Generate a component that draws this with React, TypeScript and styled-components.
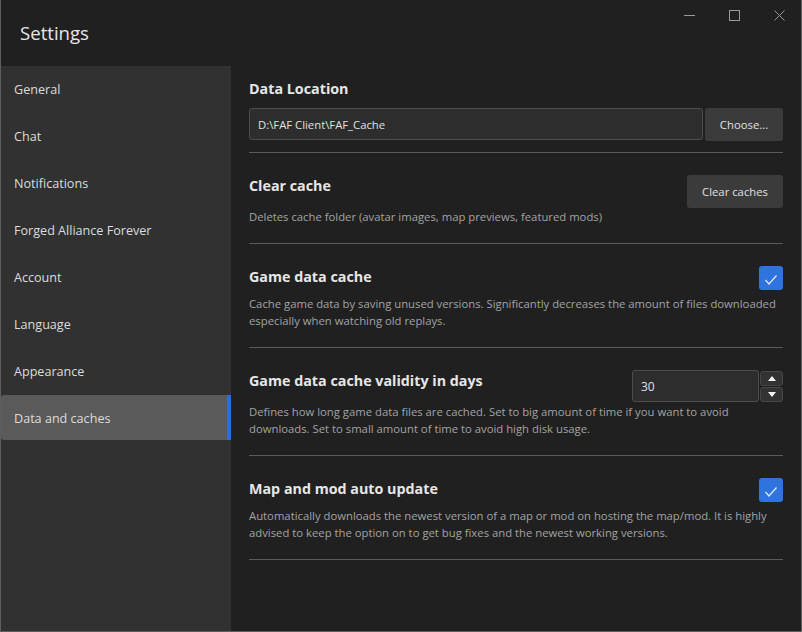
import React from 'react';
import styled, { createGlobalStyle } from 'styled-components';

const GlobalStyle = createGlobalStyle`
  html, body {
    margin: 0;
    padding: 0;
    background: #202020;
  }
  * {
    box-sizing: border-box;
  }
`;

const FONT = `"Open Sans", "Noto Sans", "Liberation Sans", sans-serif`;

const Window = styled.div`
  width: 802px;
  height: 632px;
  display: flex;
  flex-direction: column;
  border: 1px solid #5e5e5e;
  border-top: none;
  background: #202020;
  font-family: ${FONT};
  color: #e4e4e4;
  overflow: hidden;
`;

const TitleBar = styled.div`
  height: 66px;
  display: flex;
  justify-content: space-between;
  align-items: flex-start;
  flex-shrink: 0;
`;

const Title = styled.div`
  font-size: 18.6px;
  color: #e6e6e6;
  padding: 20px 0 0 19px;
  line-height: 26px;
`;

const Controls = styled.div`
  display: flex;
  margin-right: -1px;
`;

const ControlButton = styled.div`
  width: 45px;
  height: 30px;
  display: flex;
  align-items: center;
  justify-content: center;
  color: #9a9a9a;
`;

const Body = styled.div`
  flex: 1;
  display: flex;
  min-height: 0;
`;

const Sidebar = styled.nav`
  width: 230px;
  background: #313131;
  display: flex;
  flex-direction: column;
  gap: 2px;
`;

const NavItem = styled.div<{ $active?: boolean }>`
  height: 45px;
  display: flex;
  align-items: center;
  padding: 2px 0 0 13px;
  font-size: 12.6px;
  color: #dcdcdc;
  border-radius: 3px 0 0 3px;
  background: ${(p) => (p.$active ? '#5a5a5a' : 'transparent')};
  box-shadow: ${(p) => (p.$active ? 'inset -4px 0 0 #2a6fdb' : 'none')};
`;

const Content = styled.main`
  flex: 1;
  padding: 13px 18px 0 18px;
  background: #202020;
`;

const Section = styled.section<{ $first?: boolean }>`
  padding: ${(p) => (p.$first ? '0 0 11px' : '22px 0 18px')};
  border-bottom: 1px solid #5a5a5a;
`;

const Row = styled.div`
  display: flex;
  justify-content: space-between;
  align-items: flex-start;
  gap: 16px;
`;

const TextBlock = styled.div`
  flex: 1;
  padding-top: 1px;
`;

const Heading = styled.h3`
  margin: 0;
  font-size: 14.3px;
  font-weight: 700;
  line-height: 20px;
  color: #e6e6e6;
`;

const Description = styled.p<{ $gap?: number }>`
  margin: ${(p) => p.$gap ?? 8}px 0 0;
  font-size: 11.3px;
  line-height: 17px;
  color: #a3a3a3;
`;

const PathRow = styled.div`
  display: flex;
  gap: 2px;
  margin-top: 9px;
`;

const TextField = styled.div`
  flex: 1;
  height: 32px;
  display: flex;
  align-items: center;
  padding-left: 8px;
  background: #2d2d2d;
  border: 1px solid #4d4d4d;
  border-radius: 3px;
  font-size: 11.3px;
  color: #e0e0e0;
`;

const Button = styled.div<{ $width: number }>`
  width: ${(p) => p.$width}px;
  height: 33px;
  display: flex;
  align-items: center;
  justify-content: center;
  background: #3b3b3b;
  border-radius: 3px;
  font-size: 11.3px;
  color: #e0e0e0;
  flex-shrink: 0;
`;

const Checkbox = styled.div`
  width: 24px;
  height: 24px;
  border-radius: 3px;
  background: #2f74de;
  display: flex;
  align-items: center;
  justify-content: center;
  flex-shrink: 0;
`;

const Spinner = styled.div`
  display: flex;
  gap: 1px;
  flex-shrink: 0;
`;

const SpinField = styled(TextField)`
  flex: none;
  width: 127px;
  font-size: 12px;
`;

const SpinButtons = styled.div`
  display: flex;
  flex-direction: column;
  justify-content: space-between;
  padding-top: 1px;
  height: 32px;
`;

const SpinButton = styled.div`
  width: 23px;
  height: 15px;
  display: flex;
  align-items: center;
  justify-content: center;
  background: #323232;
  border: 1px solid #474747;
  border-radius: 3px;
`;

const Check = () => (
  <svg width="24" height="24" viewBox="0 0 24 24">
    <path d="M6.5 14 L10 18 L17.5 9.5" fill="none" stroke="#dde8fa" strokeWidth="1.3" />
  </svg>
);

const Arrow = ({ up }: { up?: boolean }) => (
  <svg width="8" height="5" viewBox="0 0 8 5">
    <path d={up ? 'M0 5 L4 0 L8 5 Z' : 'M0 0 L8 0 L4 5 Z'} fill="#f2f2f2" />
  </svg>
);

const navItems = [
  'General',
  'Chat',
  'Notifications',
  'Forged Alliance Forever',
  'Account',
  'Language',
  'Appearance',
  'Data and caches',
];

export default function App() {
  return (
    <>
      <GlobalStyle />
      <Window>
        <TitleBar>
          <Title>Settings</Title>
          <Controls>
            <ControlButton>
              <svg width="11" height="1" viewBox="0 0 11 1">
                <rect width="11" height="1" fill="currentColor" />
              </svg>
            </ControlButton>
            <ControlButton>
              <svg width="11" height="11" viewBox="0 0 11 11">
                <rect x="0.5" y="0.5" width="10" height="10" fill="none" stroke="currentColor" />
              </svg>
            </ControlButton>
            <ControlButton>
              <svg width="11" height="11" viewBox="0 0 11 11">
                <path d="M0.5 0.5 L10.5 10.5 M10.5 0.5 L0.5 10.5" stroke="currentColor" />
              </svg>
            </ControlButton>
          </Controls>
        </TitleBar>
        <Body>
          <Sidebar>
            {navItems.map((item) => (
              <NavItem key={item} $active={item === 'Data and caches'}>
                {item}
              </NavItem>
            ))}
          </Sidebar>
          <Content>
            <Section $first>
              <Heading>Data Location</Heading>
              <PathRow>
                <TextField>D:\FAF Client\FAF_Cache</TextField>
                <Button $width={78}>Choose...</Button>
              </PathRow>
            </Section>

            <Section>
              <Row>
                <TextBlock>
                  <Heading>Clear cache</Heading>
                  <Description $gap={12}>
                    Deletes cache folder (avatar images, map previews, featured mods)
                  </Description>
                </TextBlock>
                <Button $width={96}>Clear caches</Button>
              </Row>
            </Section>

            <Section>
              <Row>
                <TextBlock>
                  <Heading>Game data cache</Heading>
                </TextBlock>
                <Checkbox>
                  <Check />
                </Checkbox>
              </Row>
              <Description $gap={5}>
                Cache game data by saving unused versions. Significantly decreases the amount of
                files downloaded especially when watching old replays.
              </Description>
            </Section>

            <Section>
              <Row>
                <TextBlock>
                  <Heading>Game data cache validity in days</Heading>
                </TextBlock>
                <Spinner>
                  <SpinField>30</SpinField>
                  <SpinButtons>
                    <SpinButton>
                      <Arrow up />
                    </SpinButton>
                    <SpinButton>
                      <Arrow />
                    </SpinButton>
                  </SpinButtons>
                </Spinner>
              </Row>
              <Description $gap={1}>
                Defines how long game data files are cached. Set to big amount of time if you want to
                avoid downloads. Set to small amount of time to avoid high disk usage.
              </Description>
            </Section>

            <Section>
              <Row>
                <TextBlock>
                  <Heading>Map and mod auto update</Heading>
                </TextBlock>
                <Checkbox>
                  <Check />
                </Checkbox>
              </Row>
              <Description $gap={5}>
                Automatically downloads the newest version of a map or mod on hosting the map/mod. It
                is highly advised to keep the option on to get bug fixes and the newest working
                versions.
              </Description>
            </Section>
          </Content>
        </Body>
      </Window>
    </>
  );
}
